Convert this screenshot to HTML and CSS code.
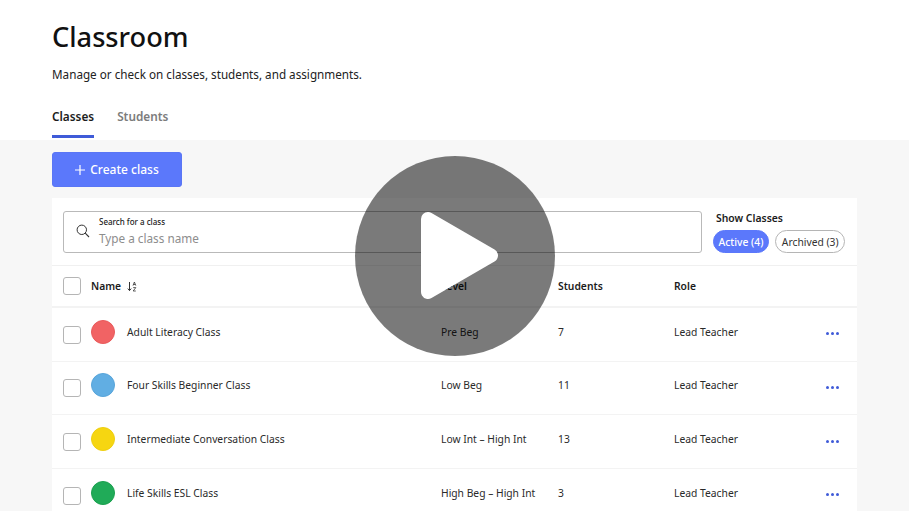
FILE: index.html
```html
<!DOCTYPE html>
<html lang="en">
<head>
<meta charset="utf-8">
<title>Classroom</title>
<link rel="stylesheet" href="styles.css">
</head>
<body>
<div class="page">
  <header class="top">
    <h1 class="title">Classroom</h1>
    <p class="subtitle">Manage or check on classes, students, and assignments.</p>
    <nav class="tabs">
      <a class="tab tab-active">Classes</a>
      <a class="tab">Students</a>
    </nav>
  </header>
  <main class="content">
    <button class="create-btn">
      <svg class="plus" width="10" height="10" viewBox="0 0 10 10"><path d="M5 0v10M0 5h10" stroke="#fff" stroke-width="1.2" fill="none"/></svg>
      Create class
    </button>
    <section class="card">
      <div class="filters">
        <div class="search">
          <svg class="search-icon" width="14" height="14" viewBox="0 0 14 14"><circle cx="5.8" cy="5.8" r="4.7" stroke="#333" stroke-width="1" fill="none"/><path d="M9.2 9.2L13 13" stroke="#333" stroke-width="1.1" fill="none"/></svg>
          <div class="search-text">
            <span class="search-label">Search for a class</span>
            <span class="search-placeholder">Type a class name</span>
          </div>
        </div>
        <div class="show">
          <div class="show-title">Show Classes</div>
          <div class="pills">
            <span class="pill pill-active">Active (4)</span>
            <span class="pill pill-archived">Archived (3)</span>
          </div>
        </div>
      </div>
      <div class="row row-head">
        <div class="name-cell"><span class="check"></span><span class="name-head">Name</span>
          <svg class="sort" width="10" height="11" viewBox="0 0 10 11"><path d="M2.5 1v8.5M0.8 7.6l1.7 2 1.7-2" stroke="#333" stroke-width="1" fill="none"/><path d="M6 4.6L7.4 1l1.4 3.6M6.5 3.5h1.8M6.2 6.6h2.6L6.2 10h2.6" stroke="#333" stroke-width=".8" fill="none"/></svg>
        </div>
        <div>Level</div><div>Students</div><div>Role</div><div></div>
      </div>
      <div class="row row-data">
        <div class="name-cell"><span class="check check-low"></span><span class="dot dot-red"></span><span>Adult Literacy Class</span></div>
        <div>Pre Beg</div><div>7</div><div>Lead Teacher</div><div class="more"><i></i><i></i><i></i></div>
      </div>
      <div class="row row-data">
        <div class="name-cell"><span class="check check-low"></span><span class="dot dot-blue"></span><span>Four Skills Beginner Class</span></div>
        <div>Low Beg</div><div>11</div><div>Lead Teacher</div><div class="more"><i></i><i></i><i></i></div>
      </div>
      <div class="row row-data">
        <div class="name-cell"><span class="check check-low"></span><span class="dot dot-yellow"></span><span>Intermediate Conversation Class</span></div>
        <div>Low Int – High Int</div><div>13</div><div>Lead Teacher</div><div class="more"><i></i><i></i><i></i></div>
      </div>
      <div class="row row-data">
        <div class="name-cell"><span class="check check-low"></span><span class="dot dot-green"></span><span>Life Skills ESL Class</span></div>
        <div>High Beg – High Int</div><div>3</div><div>Lead Teacher</div><div class="more"><i></i><i></i><i></i></div>
      </div>
    </section>
  </main>
  <div class="play">
    <svg width="80" height="88" viewBox="0 0 80 88"><path d="M8 7L71 43.5L8 80Z" fill="#fff" stroke="#fff" stroke-width="14" stroke-linejoin="round"/></svg>
  </div>
</div>
</body>
</html>
```
FILE: styles.css
```css
* { box-sizing: border-box; }
html, body { margin: 0; height: 100%; }
body { font-family: "Noto Sans", "Open Sans", sans-serif; color: #1c1c1c; background: #f7f7f7; overflow: hidden; }
.page { position: relative; width: 909px; height: 511px; overflow: hidden; }
.top { background: #fff; height: 140px; padding: 19px 52px 0; }
.title { margin: 0; font-size: 27.2px; line-height: 36px; font-weight: 500; color: #111; }
.subtitle { margin: 10px 0 0; font-size: 11.7px; line-height: 18px; color: #222; }
.tabs { display: flex; gap: 23px; margin-top: 24px; }
.tab { height: 31px; font-size: 11.8px; line-height: 18px; font-weight: 600; color: #7c7c7c; }
.tab-active { color: #1c1c1c; border-bottom: 3px solid #3f5bd8; height: 31px; }
.content { padding: 12px 52px 0; }
.create-btn { display: flex; align-items: center; justify-content: center; gap: 5px; width: 130px; height: 35px; padding: 0; border: 1px solid #5a76f5; border-radius: 3px; background: #5b78fb; color: #fff; font: 500 12px "Noto Sans", sans-serif; }
.card { width: 805px; margin-top: 11px; background: #fff; }
.filters { display: flex; height: 68px; padding: 13px 12px 0 11px; border-bottom: 1px solid #f0f0f0; }
.search { display: flex; flex: none; align-items: center; width: 639px; height: 42px; padding: 0 0 2px 12px; border: 1px solid #b9b9b9; border-radius: 3px; }
.search-icon { margin-right: 9px; }
.search-text { display: flex; flex-direction: column; }
.search-label { font-size: 8px; line-height: 11px; font-weight: 500; color: #222; }
.search-placeholder { margin-top: 3px; font-size: 11.75px; line-height: 16px; color: #8d8d8d; }
.show { margin-left: 14px; }
.show-title { font-size: 10.4px; line-height: 14px; font-weight: 600; color: #1c1c1c; }
.pills { display: flex; gap: 6.5px; margin-top: 5px; margin-left: -3px; }
.pill { display: flex; align-items: center; height: 23px; padding: 0 4.5px; border: 1px solid #b5b5b5; border-radius: 12px; font-size: 10.3px; color: #333; white-space: nowrap; }
.pill-archived { padding: 0 5.5px; }
.pill-active { background: #5b78fb; border-color: #5b78fb; color: #fff; font-weight: 500; }
.row { display: grid; grid-template-columns: 378px 117px 116px 151px 1fr; align-items: center; height: 53.67px; padding-left: 11px; font-size: 10.3px; color: #2a2a2a; border-bottom: 1px solid #f3f3f3; }
.row-data { padding-bottom: 5px; }
.row-head { height: 42px; font-weight: 600; color: #1c1c1c; border-bottom: 2px solid #f3f3f3; }
.name-cell { display: flex; align-items: center; }
.check { width: 18px; height: 18px; border: 1px solid #b5b5b5; border-radius: 3px; background: #fff; margin-right: 10px; }
.check-low { transform: translateY(3px); }
.name-head { margin-right: 6px; }
.dot { width: 24px; height: 24px; border-radius: 50%; margin-right: 12px; }
.dot-red { background: #f16364; border: 1px solid #e95a5b; }
.dot-blue { background: #61aee3; border: 1px solid #58a5da; }
.dot-yellow { background: #f6d611; border: 1px solid #eecf10; }
.dot-green { background: #20ab58; border: 1px solid #1ba04f; }
.more { display: flex; gap: 2px; margin-left: 1px; transform: translateY(2px); }
.more i { width: 3px; height: 3px; border-radius: 50%; background: #3f5bd8; }
.play { position: absolute; left: 355px; top: 156px; width: 200px; height: 200px; border-radius: 50%; background: rgba(0,0,0,.52); display: flex; align-items: center; justify-content: center; padding-left: 10px; }
```
